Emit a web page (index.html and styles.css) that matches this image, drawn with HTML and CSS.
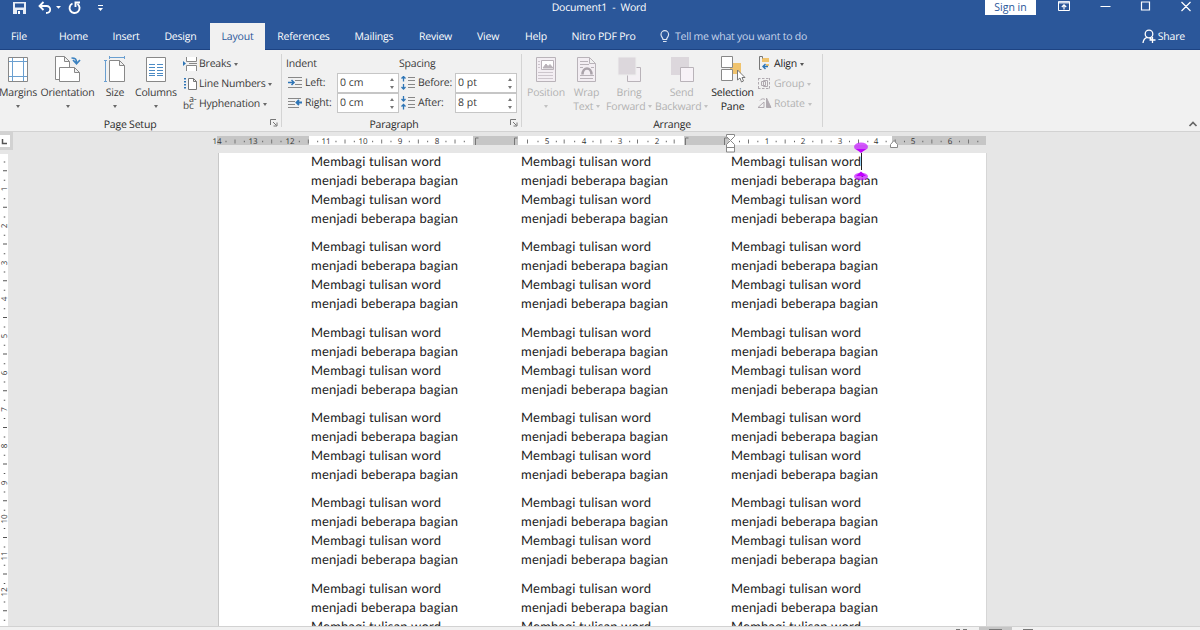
FILE: index.html
```html
<!DOCTYPE html>
<html lang="en">
<head>
<meta charset="utf-8">
<title>Document1 - Word</title>
<link rel="stylesheet" href="styles.css">
</head>
<body>
<div class="app">
  <header class="titlebar">
    <div class="quick">
      <svg width="110" height="16" viewBox="0 0 110 16" fill="none" stroke="#fff">
        <path d="M13 2h13v12H13z" fill="#e8eef7" stroke="none"/><path d="M15 3.500h9v4h-9zM17 10h6v4h-6z" fill="#2b579a" stroke="none"/><path d="M18 11h2v3h-2z" fill="#fff" stroke="none"/>
        <path d="M43.500 2L39.500 6l4 4M40 6h6.500c5 0 5 7-.5 7" stroke-width="1.800"/>
        <path d="M56 6h5L58.500 8.800z" fill="#fff" stroke="none"/>
        <path d="M72.500 3.500a5 5 0 1 0 5 .5M75.500 7V2.500H80" stroke-width="1.900"/>
        <path d="M98 5.500h5"/><path d="M98 8h5l-2.500 3z" fill="#fff" stroke="none"/>
      </svg>
    </div>
    <div class="title">Document1&nbsp; -&nbsp; Word</div>
    <div class="winbar">
      <button class="signin">Sign in</button>
      <svg width="142" height="16" viewBox="1058 0 142 16" fill="none" stroke="#fff">
        <path d="M1058.500 1.500h11v9h-11z"/><path d="M1059 2.500h10" stroke-width="2" stroke="#c9d5e8"/><path d="M1064 9.500V5M1061.800 7l2.200-2.200L1066.200 7" stroke-width="1.200"/>
        <path d="M1100.500 6.500h10M1141.500 2h8v8h-8zM1181.500 2l9 9M1190.500 2l-9 9" stroke-width="1.200"/>
      </svg>
    </div>
  </header>

  <nav class="tabs">
    <span class="tab file">File</span><span class="tab home">Home</span><span class="tab insert">Insert</span><span class="tab design">Design</span><span class="tab layout active">Layout</span><span class="tab refs">References</span><span class="tab mail">Mailings</span><span class="tab review">Review</span><span class="tab view">View</span><span class="tab help">Help</span><span class="tab nitro">Nitro PDF Pro</span>
    <span class="tell"><svg width="12" height="16" viewBox="0 0 12 16" fill="none" stroke="#dce5f2" stroke-width="1.200"><path d="M4 10.500C4 8.500 2 8 2 5.500a3.800 3.800 0 0 1 7.600 0c0 2.500-2 3-2 5zM4 12.500h3.600"/></svg>Tell me what you want to do</span>
    <span class="share"><svg width="15" height="16" viewBox="0 0 15 16" fill="none" stroke="#fff" stroke-width="1.300"><circle cx="7" cy="5" r="3.800"/><path d="M1 14c.3-3.500 2-5.200 4.500-5.700M7.500 8.700l2 1.500M10.500 8v6M7.500 11h6"/></svg>Share</span>
  </nav>

  <section class="ribbon">
    <div class="group setup">
      <div class="tools">
        <div class="big margins"><svg width="24" height="28" viewBox="0 0 24 28" fill="none"><path d="M2.500 2.500h19v24h-19z" fill="#fff" stroke="#888"/><path d="M6.500 3v23M17.500 3v23M3 6.500h18M3 21.500h18" stroke="#6a9fd0"/></svg><span>Margins</span><i class="caret"></i></div>
        <div class="big orient"><svg width="28" height="28" viewBox="0 0 28 28" fill="#fff" stroke="#888"><path d="M1.500 1.500h9l5 5v18h-14zM10.500 1.500v5h5"/><path d="M5.500 12.500h15l5 5v9h-20zM20.500 12.500v5h5"/><path d="M17.500 3c4 0 5 1 5 5M19 5l3.500 3.800L26 5" fill="none" stroke="#3c82c0" stroke-width="1.700"/></svg><span>Orientation</span><i class="caret"></i></div>
        <div class="big size"><svg width="24" height="28" viewBox="0 0 24 28" fill="#fff" stroke="#888"><path d="M6.500 5.500h10l5 5v16h-15zM16.500 5.500v5h5"/><path d="M6 2.500h15M6.500 1v3M21.500 1v3M2.500 6v20M1 5.500h3M1 26.500h3" stroke="#6a9fd0"/></svg><span>Size</span><i class="caret"></i></div>
        <div class="big columns"><svg width="24" height="28" viewBox="0 0 24 28" fill="none"><path d="M2.500 2.500h19v24h-19z" fill="#fff" stroke="#888"/><path d="M5 9.500h6M13 9.500h6M5 12.500h6M13 12.500h6M5 15.500h6M13 15.500h6M5 18.500h6M13 18.500h6M5 20.500h6M13 20.500h6" stroke="#4b8ac4"/></svg><span>Columns</span><i class="caret"></i></div>
        <div class="stack">
          <div class="small"><svg width="16" height="16" viewBox="0 0 16 16" fill="#fff" stroke="#888"><path d="M3.500 1v4.500h10V1M3.500 15v-5.500h10V15M6 7.500h8"/><path d="M0 5l3 2.500L0 10z" fill="#2e75b6" stroke="none"/></svg><span>Breaks</span><i class="caret"></i></div>
          <div class="small"><svg width="16" height="16" viewBox="0 0 16 16" fill="#fff" stroke="#777"><path d="M5.500 2.500h5l3 3v8h-8zM10.500 2.500v3h3"/><path d="M2 2v12" stroke="#2e75b6" stroke-width="2" stroke-dasharray="1.500 1.500"/></svg><span>Line Numbers</span><i class="caret"></i></div>
          <div class="small"><svg class="hyphen" width="16" height="16" viewBox="0 0 16 16"><text x="0" y="13" class="hy">bc<tspan class="hs" x="6" y="6">a-</tspan></text></svg><span>Hyphenation</span><i class="caret"></i></div>
        </div>
      </div>
      <footer><span>Page Setup</span><svg class="launch" width="8" height="8" viewBox="0 0 8 8" fill="none" stroke="#777"><path d="M.5 6V.5H6M3 3l3.500 3.500M7 3.500V7H3.500"/></svg></footer>
    </div>

    <div class="group para">
      <div class="fields">
        <b class="cap indent">Indent</b><b class="cap spacing">Spacing</b>
        <svg width="16" height="14" viewBox="0 0 16 14" fill="none" stroke="#888"><path d="M0 1.500h14M7 4.500h7M7 8.500h7M0 11.500h14"/><path d="M0 6.500h6M3.500 4L6 6.500 3.500 9" stroke="#2e75b6" stroke-width="1.500"/></svg><label>Left:</label><div class="num">0 cm<i class="spin"></i></div>
        <svg width="16" height="14" viewBox="0 0 16 14" fill="none" stroke="#888"><path d="M7 1.500h7M7 4.500h7M7 8.500h7M7 11.500h7"/><path d="M2.500 0v5.500M.5 2.500l2-2 2 2M2.500 8v5.500M.5 11l2 2 2-2" stroke="#2e75b6" stroke-width="1.300"/></svg><label>Before:</label><div class="num">0 pt<i class="spin"></i></div>
        <svg width="16" height="14" viewBox="0 0 16 14" fill="none" stroke="#888"><path d="M0 2.500h13M0 5.500h7M0 8.500h7M0 11.500h11"/><path d="M14 6.500H8.500M11 4L8.500 6.500 11 9" stroke="#2e75b6" stroke-width="1.800"/></svg><label>Right:</label><div class="num">0 cm<i class="spin"></i></div>
        <svg width="16" height="14" viewBox="0 0 16 14" fill="none" stroke="#888"><path d="M7 1.500h7M7 4.500h7M7 8.500h7M7 11.500h7"/><path d="M2.500 0v5M.5 3l2 2 2-2M2.500 13.500V8.500M.5 10.500l2-2 2 2" stroke="#2e75b6" stroke-width="1.300"/></svg><label>After:</label><div class="num">8 pt<i class="spin"></i></div>
      </div>
      <footer><span>Paragraph</span><svg class="launch" width="8" height="8" viewBox="0 0 8 8" fill="none" stroke="#777"><path d="M.5 6V.5H6M3 3l3.500 3.500M7 3.500V7H3.500"/></svg></footer>
    </div>

    <div class="group arrange">
      <div class="tools">
        <div class="big position off"><svg width="24" height="28" viewBox="0 0 24 28" fill="none" stroke="#b9b3b9"><path d="M2.500 2.500h19v24h-19z" fill="#f3eef3"/><path d="M7.500 5.500h12v9h-12z" fill="#fff"/><path d="M9 13l3-4 2 2.500 2-2 3 3.500z" fill="#b9b3b9"/><path d="M4 6.500h2M4 9.500h2M4 12.500h2M4 17.500h15M4 20.500h15M4 23.500h15" stroke="#cdc6cd"/></svg><span>Position</span><i class="caret"></i></div>
        <div class="big wrap off"><svg width="24" height="28" viewBox="0 0 24 28" fill="none" stroke="#b9b3b9"><path d="M2.500 2.500h12l6 6v18h-18zM14.500 2.500v6h6" fill="#f3eef3"/><path d="M5 6.500h8M5 9.500h9M5 12.500h3M16 12.500h3M5 23.500h13"/><path d="M7.500 19.500c0-8 9-8 9 0" stroke="#aaa3aa" stroke-width="2.500"/><path d="M5 20.500h14"/></svg><span>Wrap<br>Text <i class="caret"></i></span></div>
        <div class="big bring off"><svg width="26" height="28" viewBox="0 0 26 28" fill="#f4f0f4" stroke="#b9b3b9"><path d="M11.500 12.500h13v14h-13z"/><path d="M2 2h18v18H2z" fill="#dcd7dc" stroke="#eee"/></svg><span>Bring<br>Forward <i class="caret"></i></span></div>
        <div class="big send off"><svg width="26" height="28" viewBox="0 0 26 28" fill="#f7f2f7" stroke="#b9b3b9"><path d="M2 2h18v18H2z" fill="#dcd7dc" stroke="none"/><path d="M11.500 12.500h13v14h-13z"/></svg><span>Send<br>Backward <i class="caret"></i></span></div>
        <div class="big selection"><svg width="26" height="28" viewBox="0 0 26 28" fill="#fff" stroke="#888"><path d="M10 8h11v11H10z" fill="#f0c36d" stroke="none"/><path d="M1.500 1.500h11v11h-11zM1.500 14.500h11v11h-11z"/><path d="M17.500 15v10l2.500-2 1.500 4 2-1-1.500-3.500h3z" stroke="#777"/></svg><span>Selection<br>Pane</span></div>
        <div class="stack">
          <div class="small dark"><svg width="16" height="16" viewBox="0 0 16 16" fill="none"><path d="M5 2h7v4H5zM9 8h3v2H9z" fill="#f0c36d"/><path d="M5.500 .5h-3v13h2M5.500 .5v2" stroke="#777"/><path d="M11 10.500H6M8.500 8L6 10.500 8.500 13" stroke="#2e75b6" stroke-width="1.400"/></svg><span>Align</span><i class="caret"></i></div>
          <div class="small off"><svg width="16" height="16" viewBox="0 0 16 16" fill="none" stroke="#b0aab0"><path d="M1 2.500h12M1 12.500h12M1.500 2v11M12.500 2v11" stroke-dasharray="2.500 1.500"/><path d="M4.500 5.500h4v4h-4zM6.500 4.500h4v6h-4z"/></svg><span>Group</span><i class="caret"></i></div>
          <div class="small off"><svg width="16" height="16" viewBox="0 0 16 16" fill="none" stroke="#b0aab0"><path d="M1 11.500h6V6zM3 4.500c1-2 4-2 5-1"/><path d="M9.500 2v9.500H14z" fill="#b0aab0"/></svg><span>Rotate</span><i class="caret"></i></div>
        </div>
      </div>
      <footer><span>Arrange</span></footer>
    </div>
    <svg class="collapse" width="10" height="8" viewBox="0 0 10 8" fill="none" stroke="#666" stroke-width="1.700"><path d="M1.500 6L5 2.500 8.500 6"/></svg>
  </section>

  <main class="workspace">
    <aside class="left">
      <div class="tabstop"><svg width="10" height="12" viewBox="0 0 10 12"><path d="M2.500 4v4.500H7" fill="none" stroke="#555" stroke-width="1.500"/></svg></div>
      <svg class="vruler" width="8" height="472" viewBox="0 0 8 472">
        <path d="M4.500 7.500V472" stroke="#555" stroke-width="1.500" stroke-dasharray="1 17.330"/>
        <path d="M5 16.200V472" stroke="#555" stroke-width="4" stroke-dasharray="1 35.670"/>
        <g class="rn" text-anchor="middle"><text transform="translate(7 35)rotate(-90)">1</text><text transform="translate(7 72)rotate(-90)">2</text><text transform="translate(7 109)rotate(-90)">3</text><text transform="translate(7 145)rotate(-90)">4</text><text transform="translate(7 182)rotate(-90)">5</text><text transform="translate(7 219)rotate(-90)">6</text><text transform="translate(7 255.500)rotate(-90)">7</text><text transform="translate(7 292)rotate(-90)">8</text><text transform="translate(7 329)rotate(-90)">9</text><text transform="translate(7 365)rotate(-90)">10</text><text transform="translate(7 402)rotate(-90)">11</text><text transform="translate(7 438)rotate(-90)">12</text></g>
      </svg>
    </aside>
    <div class="canvas">
      <svg class="hruler" width="780" height="21" viewBox="210 132 780 21">
        <path d="M217 136h769v9H217z" fill="#fff"/>
        <path d="M217 136h92v9h-92zM473 136h45v9h-45zM684 136h45v9h-45zM892 136h94v9h-94z" fill="#c6c6c6"/>
        <g stroke="#666" stroke-width="1.500" stroke-dasharray="1 17.330"><path d="M225.500 141.500H471"/><path d="M537.500 141.500H680"/><path d="M739 141.500H980"/></g>
        <g stroke="#777" stroke-width="4" stroke-dasharray="1 35.670"><path d="M234.500 141.500H470"/><path d="M527 141.500H680"/><path d="M748 141.500H980"/></g>
        <path d="M475.500 145v-7h3M514.500 145v-7h3M685.500 145v-7h3M724.500 145v-7h3" stroke="#777" fill="none"/>
        <g class="rn" text-anchor="middle"><text x="217" y="144">14</text><text x="253" y="144">13</text><text x="290" y="144">12</text><text x="326" y="144">11</text><text x="363" y="144">10</text><text x="400" y="144">9</text><text x="437" y="144">8</text><text x="547" y="144">5</text><text x="584" y="144">4</text><text x="620" y="144">3</text><text x="657" y="144">2</text><text x="767" y="144">1</text><text x="803" y="144">2</text><text x="840" y="144">3</text><text x="876" y="144">4</text><text x="913" y="144">5</text><text x="950" y="144">6</text></g>
        <path d="M726.500 134.500h8v2l-4 4-4-4zM730.500 140.500l4 4v7.500h-8v-7.500zM726.500 147.500h8M890.500 147.500v-3l3.500-4 3.500 4v3z" fill="#fff" stroke="#888"/>
      </svg>
      <article class="page">
        <div class="col">
          <p>Membagi tulisan word<br><em>menjadi beberapa bagian</em><br>Membagi tulisan word<br><em>menjadi beberapa bagian</em></p>
          <p>Membagi tulisan word<br><em>menjadi beberapa bagian</em><br>Membagi tulisan word<br><em>menjadi beberapa bagian</em></p>
          <p>Membagi tulisan word<br><em>menjadi beberapa bagian</em><br>Membagi tulisan word<br><em>menjadi beberapa bagian</em></p>
          <p>Membagi tulisan word<br><em>menjadi beberapa bagian</em><br>Membagi tulisan word<br><em>menjadi beberapa bagian</em></p>
          <p>Membagi tulisan word<br><em>menjadi beberapa bagian</em><br>Membagi tulisan word<br><em>menjadi beberapa bagian</em></p>
          <p>Membagi tulisan word<br><em>menjadi beberapa bagian</em><br>Membagi tulisan word</p>
        </div>
        <div class="col">
          <p>Membagi tulisan word<br><em>menjadi beberapa bagian</em><br>Membagi tulisan word<br><em>menjadi beberapa bagian</em></p>
          <p>Membagi tulisan word<br><em>menjadi beberapa bagian</em><br>Membagi tulisan word<br><em>menjadi beberapa bagian</em></p>
          <p>Membagi tulisan word<br><em>menjadi beberapa bagian</em><br>Membagi tulisan word<br><em>menjadi beberapa bagian</em></p>
          <p>Membagi tulisan word<br><em>menjadi beberapa bagian</em><br>Membagi tulisan word<br><em>menjadi beberapa bagian</em></p>
          <p>Membagi tulisan word<br><em>menjadi beberapa bagian</em><br>Membagi tulisan word<br><em>menjadi beberapa bagian</em></p>
          <p>Membagi tulisan word<br><em>menjadi beberapa bagian</em><br>Membagi tulisan word</p>
        </div>
        <div class="col">
          <p>Membagi tulisan word<br><em>menjadi beberapa bagian</em><br>Membagi tulisan word<br><em>menjadi beberapa bagian</em></p>
          <p>Membagi tulisan word<br><em>menjadi beberapa bagian</em><br>Membagi tulisan word<br><em>menjadi beberapa bagian</em></p>
          <p>Membagi tulisan word<br><em>menjadi beberapa bagian</em><br>Membagi tulisan word<br><em>menjadi beberapa bagian</em></p>
          <p>Membagi tulisan word<br><em>menjadi beberapa bagian</em><br>Membagi tulisan word<br><em>menjadi beberapa bagian</em></p>
          <p>Membagi tulisan word<br><em>menjadi beberapa bagian</em><br>Membagi tulisan word<br><em>menjadi beberapa bagian</em></p>
          <p>Membagi tulisan word<br><em>menjadi beberapa bagian</em><br>Membagi tulisan word</p>
        </div>
      </article>
    </div>
    <svg class="cursor" width="16" height="40" viewBox="0 0 16 40"><path d="M8.500 11v17" stroke="#222"/><g fill="#bf00ff"><ellipse cx="8" cy="4.800" rx="7" ry="4.300" fill-opacity=".65"/><path d="M3 7h10l-5 4z"/><ellipse cx="8" cy="34.500" rx="7" ry="3.800" fill-opacity=".65"/><path d="M3 34h10L8 29.500z"/></g></svg>
  </main>
  <footer class="status"><svg width="90" height="3" viewBox="950 627 90 3"><path d="M979 627h33v3h-33z" fill="#c6c6c6"/><path d="M956 629.500h4M963 629.500h4M989 629.500h13M1023 629.500h10" stroke="#777"/></svg></footer>
</div>
</body>
</html>
```
FILE: styles.css
```css
* { box-sizing: border-box; }
body { margin: 0; overflow: hidden; font: 10.5px "Open Sans", "Noto Sans", sans-serif; color: #3a3a3a; text-rendering: geometricPrecision; letter-spacing: -.2px; }
svg { display: block; flex: none; }
.app { width: 1200px; height: 630px; display: flex; flex-direction: column; background: #e6e6e6; }

.titlebar { height: 23px; flex: none; background: #2b579a; color: #fff; display: grid; grid-template-columns: 500px 198px 1fr; align-items: start; }
.title { text-align: center; line-height: 17px; white-space: nowrap; }
.winbar { display: flex; justify-content: flex-end; }
.signin { width: 51px; height: 15px; margin: 0 22px 0 0; padding: 0; border: 0; background: #fff; color: #2b579a; font: inherit; letter-spacing: 0; line-height: 13px; }

.tabs { height: 27px; flex: none; background: #2b579a; color: #fff; display: flex; border-bottom: 1px solid #1d4383; line-height: 29px; white-space: nowrap; }
.tab { text-align: center; }
.tab, .share { font-weight: 500; }
.file { width: 38px; margin-right: 8px; }
.home { width: 55px; }
.insert { width: 50px; }
.design { width: 59px; }
.layout { width: 55px; }
.refs { width: 77px; }
.mail { width: 64px; }
.review { width: 59px; }
.view { width: 46px; }
.help { width: 50px; }
.nitro { width: 85px; }
.active { height: 27px; background: #f1f1f1; color: #2b579a; font-weight: 400; }
.tell { display: flex; height: 28px; align-items: center; gap: 4px; margin-left: 13px; color: #c7d5ea; letter-spacing: -.22px; }
.share { display: flex; height: 28px; align-items: center; gap: 1px; margin-left: auto; padding-right: 15px; }

.ribbon { height: 82px; flex: none; background: #f1f1f1; border-bottom: 1px solid #d2d2d2; display: flex; padding-top: 4px; }
.group { height: 73px; border-right: 1px solid #d4d4d4; display: flex; flex-direction: column; justify-content: space-between; }
.setup { width: 282px; }
.para { width: 240px; }
.arrange { width: 301px; }
.group footer { display: flex; height: 13px; flex: none; align-items: center; justify-content: center; position: relative; margin-bottom: -4px; color: #2a2a2a; }
.setup footer { padding-right: 21px; }
.para footer { padding-right: 15px; }
.launch { position: absolute; right: 3px; top: 1px; }
.tools { display: flex; height: 62px; }
.big { display: flex; flex-direction: column; align-items: center; text-align: center; line-height: 14px; white-space: nowrap; padding-top: 1px; }
.big svg { margin-bottom: 3px; }
.big > .caret { margin-top: 5px; }
.margins { width: 36px; }
.orient { width: 63px; }
.size { width: 32px; }
.columns { width: 50px; margin-right: 2px; }
.position { width: 48px; }
.wrap { width: 33px; }
.bring { width: 52px; }
.send { width: 53px; }
.selection { width: 49px; color: #222; }
.dark { color: #222; }
.off { color: #b1b1b1; }
.caret { display: inline-block; width: 0; height: 0; border: 2.500px solid transparent; border-top: 3px solid currentColor; border-bottom: 0; vertical-align: 2px; opacity: .75; }
.stack { display: flex; flex-direction: column; }
.small { height: 20px; flex: none; display: flex; align-items: center; white-space: nowrap; }
.small .caret { margin-left: 3px; }
.arrange .small span { margin-left: 1px; }
.hyphen { overflow: visible; }
.hy { font: 10px "Open Sans", sans-serif; fill: #444; }
.hs { font-size: 9px; }

.fields { display: grid; grid-template-columns: 17px 32px 62px 2px 17px 37px 62px; grid-template-rows: 19px 20px 20px; padding-left: 6px; align-items: center; }
.fields > svg:nth-of-type(even) { grid-column: 5; }
.cap { font-weight: normal; }
.indent { grid-column: 1 / 4; margin-left: -2px; }
.spacing { grid-column: 4 / 8; }
.num { height: 20px; background: #fff; border: 1px solid #c6c6c6; padding: 0 4px 0 2px; display: flex; align-items: center; justify-content: space-between; letter-spacing: 0; }
.spin { display: flex; flex-direction: column; gap: 5px; }
.spin::before, .spin::after { content: ""; border: 2.500px solid transparent; }
.spin::before { border-top: 0; border-bottom: 3px solid #777; }
.spin::after { border-bottom: 0; border-top: 3px solid #777; }
.collapse { margin: 66px 2px 0 auto; }

.workspace { height: 494px; flex: none; position: relative; display: flex; overflow: hidden; }
.left { width: 13px; margin-right: 197px; }
.tabstop { width: 13px; height: 18px; background: #d2d2d2; padding: 3px 3px 3px 0; margin-bottom: 4px; }
.tabstop svg { background: #fff; }
.vruler { background: #fff; }
.rn { font: 8px "Open Sans", sans-serif; fill: #333; letter-spacing: 0; }
.page { width: 769px; height: 473px; margin-left: 8px; padding-left: 92px; background: #fff; border-left: 1px solid #c8c8c8; border-right: 1px solid #d6d6d6; display: grid; grid-template-columns: 210px 210px 210px; align-items: start; overflow: hidden; }
.col { margin-top: -1px; font: 13px/19px Lato, sans-serif; color: #222; white-space: nowrap; letter-spacing: .2px; }
.col p { margin: 0 0 9.330px; }
.col em { font-style: normal; letter-spacing: .23px; }
.cursor { position: absolute; left: 853px; top: 10px; }
.status { height: 4px; flex: none; background: #f1f1f1; border-top: 1px solid #d2d2d2; display: flex; padding-left: 950px; }
```
